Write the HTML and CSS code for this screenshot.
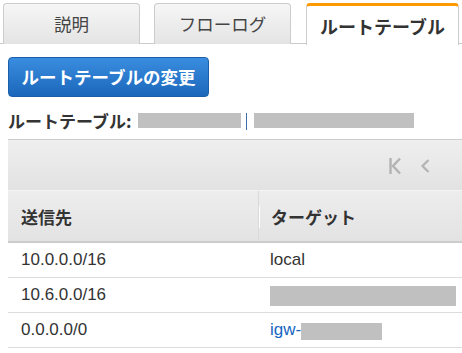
FILE: index.html
```html
<!DOCTYPE html>
<html lang="ja">
<head>
<meta charset="utf-8">
<link rel="stylesheet" href="styles.css">
</head>
<body>
<div class="tabs">
  <div class="tab">説明</div>
  <div class="tab">フローログ</div>
  <div class="tab active">ルートテーブル</div>
</div>
<div class="content">
  <button class="btn">ルートテーブルの変更</button>
  <div class="rt-label">
    <span class="rt-title">ルートテーブル:</span>
    <span class="redact r1"></span>
    <span class="sep"></span>
    <span class="redact r2"></span>
  </div>
  <div class="table">
    <div class="toolbar">
      <svg class="pg" width="12" height="18" viewBox="0 0 12 18"><path d="M1.5 1v16M11 1.5 4 9l7 7.5" fill="none" stroke="#b3b3b3" stroke-width="2.4"/></svg>
      <svg class="pg prev" width="10" height="18" viewBox="0 0 10 18"><path d="M8.5 3 2.5 9l6 6" fill="none" stroke="#b3b3b3" stroke-width="2.2"/></svg>
    </div>
    <div class="row head">
      <div class="c1">送信先</div>
      <div class="c2">ターゲット</div>
    </div>
    <div class="row">
      <div class="c1">10.0.0.0/16</div>
      <div class="c2">local</div>
    </div>
    <div class="row">
      <div class="c1">10.6.0.0/16</div>
      <div class="c2"><span class="redact r3"></span></div>
    </div>
    <div class="row">
      <div class="c1">0.0.0.0/0</div>
      <div class="c2"><a class="link">igw-</a><span class="redact r4"></span></div>
    </div>
  </div>
</div>
</body>
</html>
```
FILE: styles.css
```css
* { box-sizing: border-box; }
html, body { margin: 0; padding: 0; background: #fff; overflow: hidden; }
body {
  width: 462px; height: 353px;
  font-family: "Liberation Sans", Arial, "Noto Sans CJK JP", sans-serif;
  color: #333;
  font-size: 17px;
}
.tabs {
  display: flex;
  gap: 14px;
  padding: 3px 0 0 3px;
  height: 44px;
  border-bottom: 1px solid #ccc;
}
.tab {
  width: 137px;
  height: 41px;
  border: 1px solid #ccc;
  border-bottom: none;
  border-radius: 4px 4px 0 0;
  background: linear-gradient(#f6f6f6, #e4e4e4);
  display: flex;
  align-items: center;
  justify-content: center;
  font-family: "Noto Sans CJK JP", sans-serif;
  font-size: 17.5px;
  color: #444;
  padding-bottom: 2px;
}
.tab.active {
  width: 153px;
  margin-left: 1px;
  height: 42px;
  background: #fff;
  border-top: 3px solid #f90;
  color: #333;
  font-weight: bold;
  font-size: 18px;
  padding-bottom: 0;
}
.content { padding-left: 8px; }
.btn {
  display: block;
  margin-top: 13px;
  width: 201px;
  height: 40px;
  border: 1px solid #1b5fa8;
  border-radius: 4px;
  background: linear-gradient(#3a8de0, #1b67bb);
  color: #fff;
  font-family: "Noto Sans CJK JP", sans-serif;
  font-weight: bold;
  font-size: 17.5px;
  padding: 0 0 2px;
  text-align: center;
}
.rt-label {
  display: flex;
  align-items: center;
  height: 20px;
  margin-top: 13px;
}
.rt-title {
  font-family: "Noto Sans CJK JP", sans-serif;
  font-weight: bold;
  font-size: 17px;
  color: #333;
  width: 130px;
  white-space: nowrap;
}
.redact { display: inline-block; background: #c0c0c0; }
.r1 { width: 103px; height: 15px; }
.sep { width: 1px; height: 17px; background: #3b6ea8; margin: 2px 7px 0 5px; }
.r2 { width: 160px; height: 15px; }
.table {
  margin-top: 9px;
  width: 454px;
}
.toolbar {
  height: 52px;
  border-top: 1px solid #ccc;
  border-bottom: 1px solid #f4f4f4;
  background: linear-gradient(#efefef, #e2e2e2);
  display: flex;
  align-items: center;
  justify-content: flex-end;
  padding-right: 32px;
  gap: 19px;
}
.pg { display: block; margin-top: 1px; }
.row {
  display: flex;
  align-items: center;
  height: 35px;
  border-bottom: 1px solid #ddd;
  font-size: 17px;
}
.row.head {
  height: 52px;
  background: linear-gradient(#ededed, #e3e3e3);
  border-bottom: 2px solid #ccc;
  font-family: "Noto Sans CJK JP", sans-serif;
  font-weight: bold;
  color: #333;
}
.c1 { width: 250px; padding-left: 13px; }
.c2 { flex: 1; padding-left: 12px; display: flex; align-items: center; }
.row.head .c2 {
  align-self: stretch;
  border-left: 1px solid #dadada;
  position: relative;
}
.row.head .c2::before {
  content: "";
  position: absolute;
  left: 0; top: 15px;
  width: 1px; height: 22px;
  background: #fff;
}
.r3 { width: 186px; height: 20px; margin-top: 2px; }
.link { color: #1666c2; }
.r4 { width: 81px; height: 17px; margin-top: 2px; }
```
